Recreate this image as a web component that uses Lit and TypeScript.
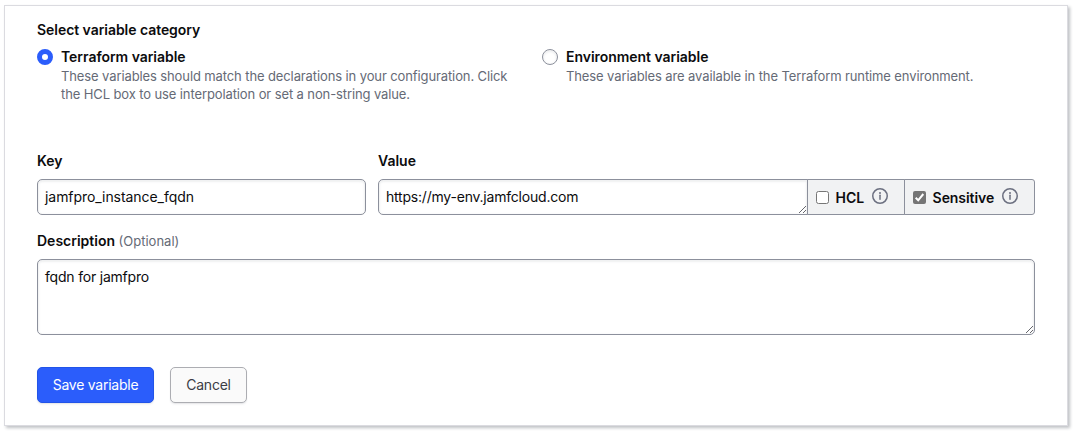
import { LitElement, html, css, svg } from "lit";
import { customElement, property } from "lit/decorators.js";

const grip = html`<svg class="grip" width="9" height="9" viewBox="0 0 9 9" aria-hidden="true">
  <path d="M1 8L8 1M5 8L8 5" fill="none" stroke="#55565c" stroke-width="0.9" />
</svg>`;

const ring = svg`<circle cx="8" cy="8" r="7.25" fill="none" stroke="#6c7080" stroke-width="1.5" />`;

@customElement("radio-option")
class RadioOption extends LitElement {
  @property() heading = "";
  @property({ type: Boolean }) selected = false;

  static styles = css`
    :host { display: flex; gap: 8px; }
    .dot {
      box-sizing: border-box; flex: none; width: 16px; height: 16px; margin-top: 1px;
      border: 1px solid #8c909c; border-radius: 50%; background: #fff;
      box-shadow: inset 0 1px 2px 1px rgba(101, 106, 118, 0.1);
    }
    .dot.on { border: 5px solid #2b5dfb; box-shadow: none; }
    .heading { margin-bottom: 1px; font-weight: 600; font-size: 14px; line-height: 18px; letter-spacing: -0.04px; color: #0c0c0e; }
    .help { font-size: 13px; line-height: 18px; letter-spacing: -0.11px; color: #656a76; white-space: nowrap; }
  `;

  render() {
    return html`
      <span class="dot ${this.selected ? "on" : ""}"></span>
      <div>
        <div class="heading">${this.heading}</div>
        <div class="help"><slot></slot></div>
      </div>`;
  }
}

@customElement("flag-toggle")
class FlagToggle extends LitElement {
  @property() label = "";
  @property({ type: Boolean }) checked = false;

  static styles = css`
    :host {
      box-sizing: border-box; display: flex; align-items: center; height: 36px; padding-left: 8px;
      background: #f1f2f3; border: 1px solid #8c909c;
    }
    .box { flex: none; margin-top: 1px; }
    .label { flex: none; margin: 2px 8px 0 6.6px; font-weight: 600; font-size: 14px; line-height: 18px; color: #0c0c0e; letter-spacing: -0.06px; }
    .info { flex: none; margin-top: -2px; }
  `;

  render() {
    return html`
      <svg class="box" width="13" height="13" viewBox="0 0 13 13">
        ${this.checked
          ? svg`<rect width="13" height="13" rx="2" fill="#757575" /><path d="M2.7 6.8L5.2 9.3L10.3 3" fill="none" stroke="#fff" stroke-width="2" />`
          : svg`<rect x=".5" y=".5" width="12" height="12" rx="2" fill="#fff" stroke="#767676" />`}
      </svg>
      <span class="label">${this.label}</span>
      <svg class="info" width="16" height="16" viewBox="0 0 16 16">
        ${ring}
        <circle cx="8" cy="5" r="1" fill="#6c7080" />
        <path d="M8 7.25V11.25" stroke="#6c7080" stroke-width="1.5" stroke-linecap="round" />
      </svg>`;
  }
}

@customElement("app-root")
class AppRoot extends LitElement {
  static styles = css`
    :host {
      box-sizing: border-box; display: block; height: 434px; padding: 5px 5px 0 4px; overflow: hidden;
      background: #fff; font-family: Inter, "Liberation Sans", sans-serif; font-size: 14px; color: #0c0c0e;
    }
    .panel {
      box-sizing: border-box; height: 421px; padding: 15px 32px 0; background: #fff;
      border: 1px solid #dbdbe0; box-shadow: 2px 2px 3px rgba(60, 64, 76, 0.32);
    }
    .title { font-weight: 600; line-height: 18px; }
    .t-category { letter-spacing: -0.05px; }
    .options { display: grid; grid-template-columns: 505px 1fr; height: 55px; margin-top: 9px; }
    .fields { display: grid; grid-template-columns: 329px 1fr; gap: 12px; margin-top: 49px; }
    .control {
      box-sizing: border-box; position: relative; height: 36px; margin-top: 9px; padding: 8px 7px;
      line-height: 18px; border: 1px solid #8c909c; border-radius: 5px; background: #fff;
      box-shadow: inset 0 1px 2px 1px rgba(101, 106, 118, 0.1);
    }
    .v-key { letter-spacing: -0.06px; }
    .v-url { letter-spacing: -0.21px; }
    .v-desc { letter-spacing: -0.2px; }
    .group { display: flex; margin-top: 9px; }
    .group .control { flex: none; width: 430px; margin: 0; border-radius: 5px 0 0 5px; }
    .hcl { flex: none; width: 98px; margin-left: -1px; }
    .sensitive { flex: 1; margin-left: -1px; border-radius: 0 3px 3px 0; }
    .grip { position: absolute; right: 0; bottom: 0; }
    .description { margin-top: 17px; }
    .optional { font-weight: 400; font-size: 13px; color: #656a76; }
    .area { height: 76px; }
    .actions { display: flex; gap: 16px; margin-top: 32px; }
    button {
      box-sizing: border-box; height: 36px; padding: 0 0 1px; font: inherit; letter-spacing: -0.25px; border-radius: 5px;
      box-shadow: 0 1px 1px rgba(101, 106, 118, 0.1), 0 2px 2px rgba(101, 106, 118, 0.05);
    }
    .save { width: 117px; color: #fff; background: #2b5dfb; border: 1px solid #2254e8; }
    .cancel { width: 77px; color: #3b3d45; background: #fafafa; border: 1px solid #acadb2; }
  `;

  render() {
    return html`
      <div class="panel">
        <div class="title t-category">Select variable category</div>
        <div class="options">
          <radio-option heading="Terraform variable" selected>These variables should match the declarations in your configuration. Click<br />the HCL box to use interpolation or set a non-string value.</radio-option>
          <radio-option heading="Environment variable">These variables are available in the Terraform runtime environment.</radio-option>
        </div>
        <div class="fields">
          <div>
            <div class="title">Key</div>
            <div class="control"><span class="v-key">jamfpro_instance_fqdn</span></div>
          </div>
          <div>
            <div class="title">Value</div>
            <div class="group">
              <div class="control"><span class="v-url">https://my-env.jamfcloud.com</span>${grip}</div>
              <flag-toggle class="hcl" label="HCL"></flag-toggle>
              <flag-toggle class="sensitive" label="Sensitive" checked></flag-toggle>
            </div>
          </div>
        </div>
        <div class="title description">Description <span class="optional">(Optional)</span></div>
        <div class="control area"><span class="v-desc">fqdn for jamfpro</span>${grip}</div>
        <div class="actions">
          <button class="save">Save variable</button>
          <button class="cancel">Cancel</button>
        </div>
      </div>`;
  }
}
